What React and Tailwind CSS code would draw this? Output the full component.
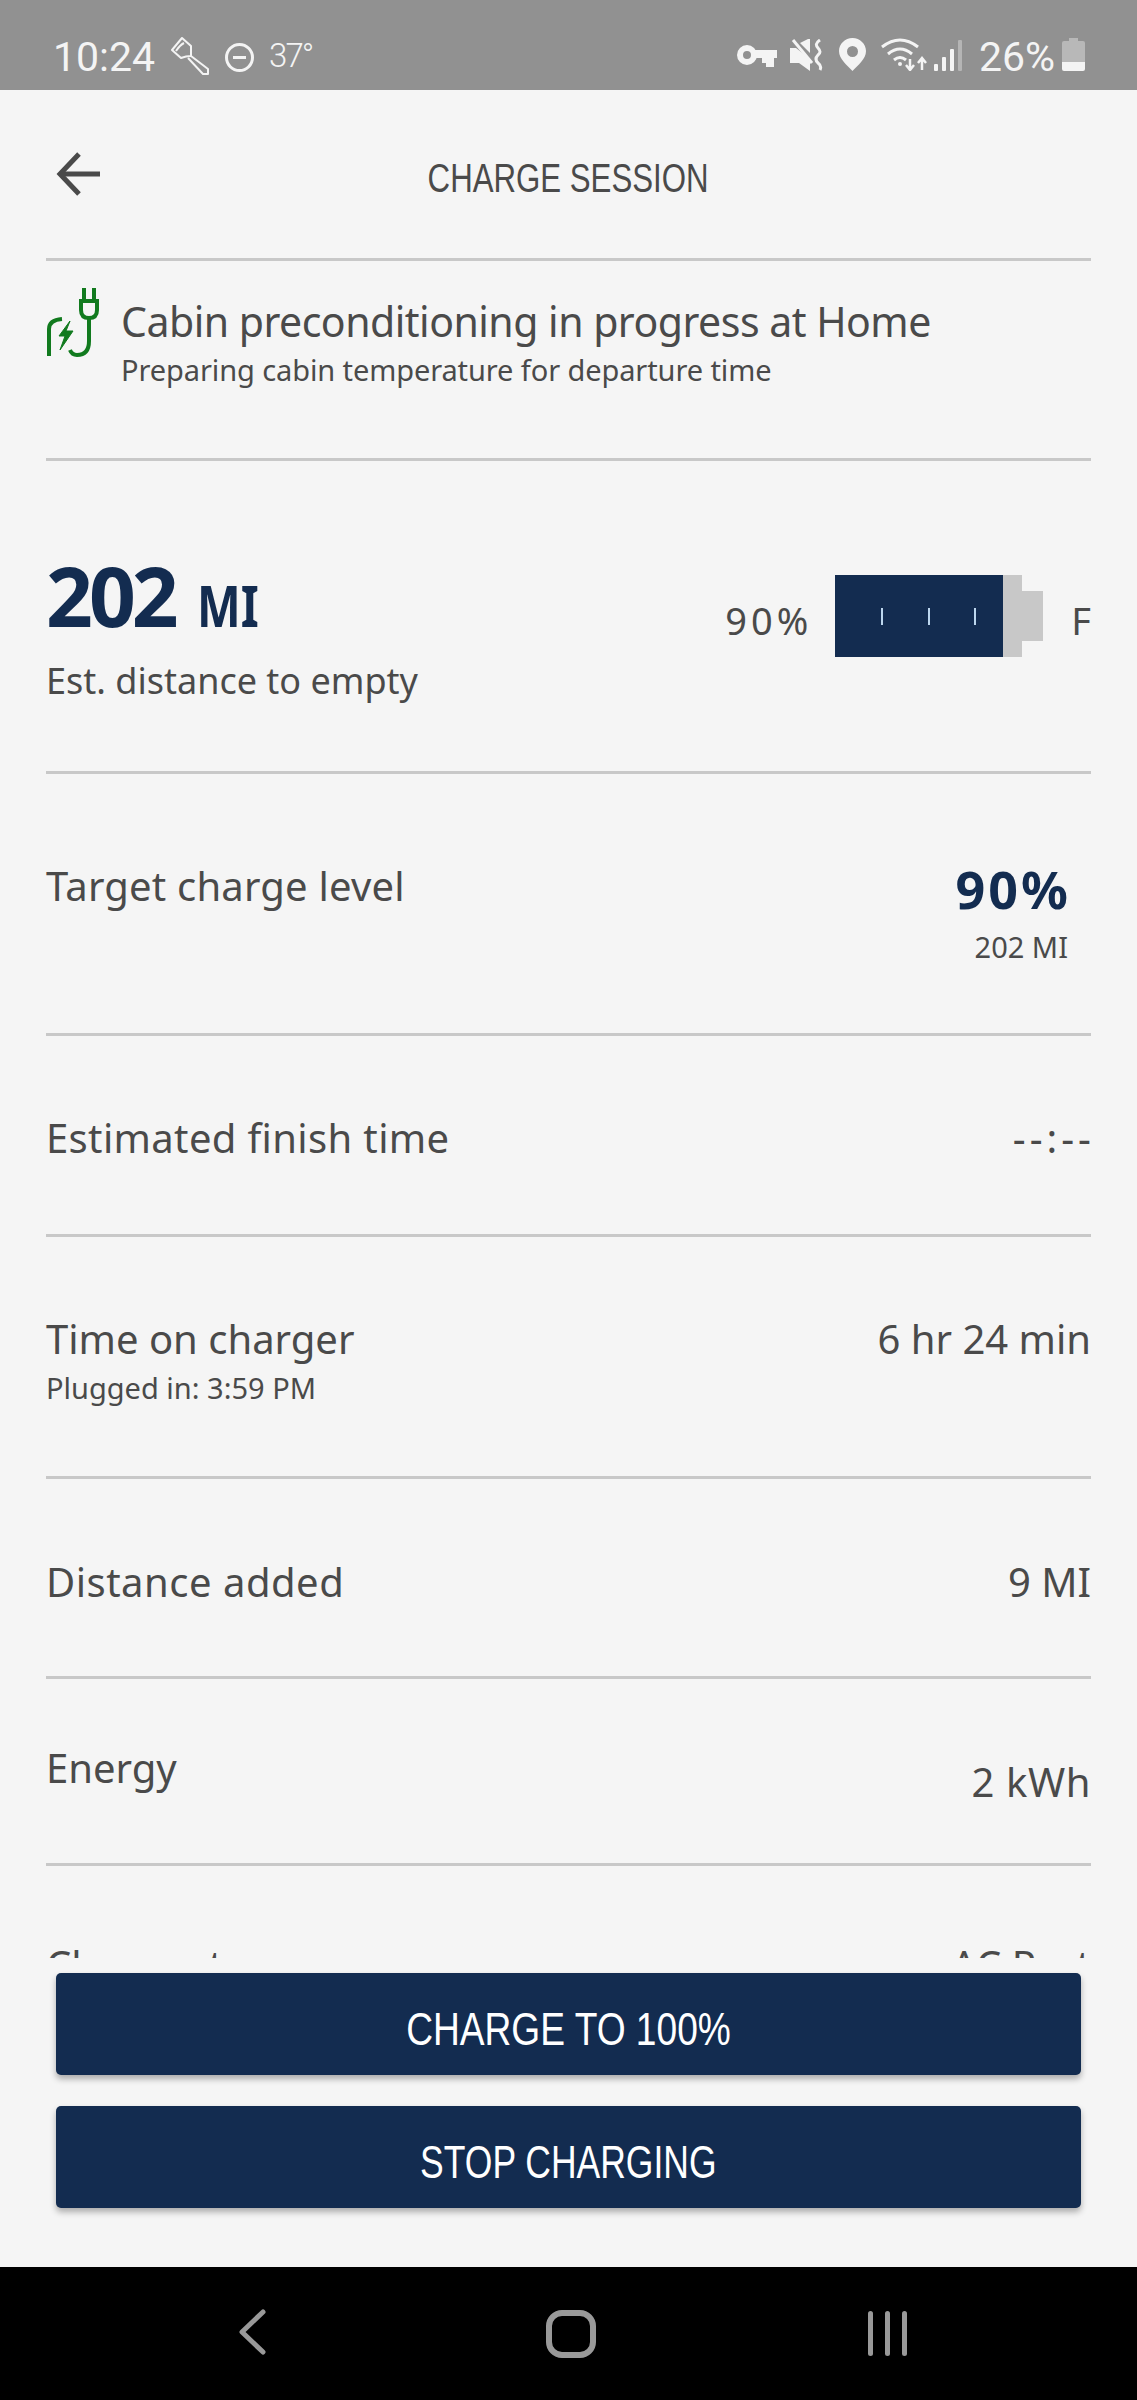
import React from 'react';

const body = "font-['Noto_Sans','Open_Sans',sans-serif]";
const narrow = "font-['Liberation_Sans',sans-serif]";

function Flashlight() {
  return (
    <svg width="38" height="38" viewBox="0 0 38 38" fill="none" stroke="#f4f4f4" strokeWidth="2" strokeLinejoin="round">
      <path d="M1 13 L11 1 L20 9 Q20 16 20 19 Q15 19 10 21 Z" />
      <path d="M5 14 Q9 8 13 6" />
      <path d="M20 19 L37 32 L37 37 L32 37 L17 21" />
    </svg>
  );
}

function Key() {
  return (
    <svg width="40" height="22" viewBox="0 0 40 22" fill="none">
      <circle cx="10" cy="10" r="7" stroke="#f4f4f4" strokeWidth="6" />
      <path d="M16 5 H40 V13 H37 V22 H29 V18 H25 V13 H16 Z" fill="#f4f4f4" />
    </svg>
  );
}

function Mute() {
  return (
    <svg width="34" height="32" viewBox="0 0 34 32" fill="none">
      <path d="M0 9 H6 L20 20 V32 L9 24 H0 Z" fill="#f4f4f4" />
      <path d="M3 1 L22 24" stroke="#f4f4f4" strokeWidth="3" />
      <path d="M10 4 L20 -1 V14 Z" fill="#f4f4f4" />
      <path d="M30 1 Q24 5 28 9 Q32 13 28 16 Q24 20 28 24 Q32 27 30 31" stroke="#f4f4f4" strokeWidth="3" />
    </svg>
  );
}

function Pin() {
  return (
    <svg width="27" height="33" viewBox="0 0 27 33">
      <path fillRule="evenodd" d="M13.5 0 C21 0 27 6 27 13 C27 21 19 27 13.5 33 C8 27 0 21 0 13 C0 6 6 0 13.5 0 Z M13.5 8 A5.5 5.5 0 1 0 13.5 19 A5.5 5.5 0 1 0 13.5 8 Z" fill="#f4f4f4" />
    </svg>
  );
}

function Wifi() {
  return (
    <svg width="46" height="33" viewBox="0 0 46 33" fill="none" stroke="#f4f4f4" strokeWidth="3">
      <path d="M1 9 Q19 -5 37 9" />
      <path d="M7 16 Q19 6 31 16" />
      <path d="M13 22 Q19 17 25 22" />
      <circle cx="19" cy="26" r="2" fill="#f4f4f4" stroke="none" />
      <path d="M29 21 V31 M25 27 L29 32 L33 27" strokeWidth="2.5" />
      <path d="M41 32 V21 M37 25 L41 20 L45 25" strokeWidth="2.5" />
    </svg>
  );
}

function Signal() {
  return (
    <svg width="29" height="31" viewBox="0 0 29 31">
      <rect x="0" y="24" width="4" height="7" rx="1" fill="#f4f4f4" />
      <rect x="8" y="17" width="4" height="14" rx="1" fill="#f4f4f4" />
      <rect x="16" y="9" width="4" height="22" rx="1" fill="#f4f4f4" />
      <rect x="24" y="0" width="4" height="31" rx="1" fill="#b5b5b5" />
    </svg>
  );
}

function BatteryIcon() {
  return (
    <svg width="23" height="33" viewBox="0 0 23 33">
      <path d="M7 0 H16 V3 H21 Q23 3 23 5 V24 H0 V5 Q0 3 2 3 H7 Z" fill="#b8b8b8" />
      <path d="M0 24 H23 V31 Q23 33 21 33 H2 Q0 33 0 31 Z" fill="#f4f4f4" />
    </svg>
  );
}

function PlugIcon() {
  return (
    <svg className="shrink-0" width="56" height="70" viewBox="0 0 56 70" fill="none" stroke="#117a1e" strokeWidth="4">
      <path d="M3 68 V41 Q3 32 16 31" />
      <path d="M24 33 L13 48 L19 48 L14 62 L27 43 L20 43 Z" fill="#117a1e" strokeWidth="1" strokeLinejoin="round" />
      <path d="M38 0 V12 M48 0 V12" />
      <path d="M35 13 H51 V22 Q51 30 43 30 Q35 30 35 22 Z" />
      <path d="M43 30 V53 Q43 67 31 67 Q26 67 24 62" />
    </svg>
  );
}

function Row({ className = '', children }) {
  return <div className={`mx-[46px] border-b-[3px] border-[#c8c8c8] ${className}`}>{children}</div>;
}

function App() {
  return (
    <div className={`flex h-[2400px] w-[1137px] flex-col overflow-hidden bg-[#f5f5f5] text-[#4a4a4a] ${body}`}>
      {/* status bar */}
      <div className="flex h-[90px] shrink-0 items-start justify-between bg-[#919191] pl-[53px] pr-[52px] pt-[37px] font-['Roboto',sans-serif] text-[#f4f4f4]">
        <div className="flex items-start">
          <span className="text-[41px] leading-[40px]">10:24</span>
          <span className="ml-[16px]"><Flashlight /></span>
          <span className="ml-[16px] mt-[6px] flex h-[29px] w-[29px] items-center justify-center rounded-full border-[3px] border-[#f4f4f4]">
            <span className="h-[3px] w-[13px] bg-[#f4f4f4]" />
          </span>
          <span className="ml-[15px] mt-[1px] text-[33px] font-light leading-[36px] tracking-[-2px]">37°</span>
        </div>
        <div className="flex items-start">
          <span className="mt-[8px]"><Key /></span>
          <span className="ml-[13px] mt-[2px]"><Mute /></span>
          <span className="ml-[15px] mt-[1px]"><Pin /></span>
          <span className="ml-[15px] mt-[1px]"><Wifi /></span>
          <span className="ml-[7px] mt-[3px]"><Signal /></span>
          <span className="ml-[16px] text-[41px] leading-[40px]">26%</span>
          <span className="ml-[7px] mt-[1px]"><BatteryIcon /></span>
        </div>
      </div>

      {/* scrolling content */}
      <div className="min-h-0 flex-1 overflow-hidden">
        <div className="relative flex h-[168px] items-center justify-center pb-[2px] pt-[10px]">
          <svg className="absolute left-[56px] top-[62px]" width="46" height="44" viewBox="0 0 46 44" fill="none" stroke="#4a4a4a" strokeWidth="5">
            <path d="M23 2 L4 22 L23 42" />
            <path d="M4 22 H44" />
          </svg>
          <h1 className={`scale-x-[0.78] whitespace-nowrap text-[40px] font-normal leading-none ${narrow}`}>CHARGE SESSION</h1>
        </div>
        <div className="mx-[46px] h-[3px] bg-[#c8c8c8]" />

        <Row className="flex h-[200px] items-start pt-[27px]">
          <PlugIcon />
          <div className="ml-[19px] mt-[8px]">
            <div className="text-[41px] leading-[50px] tracking-[-0.5px]">Cabin preconditioning in progress at Home</div>
            <div className="mt-[4px] text-[29px] leading-[40px] tracking-[-0.1px]">Preparing cabin temperature for departure time</div>
          </div>
        </Row>

        <Row className="flex h-[313px] items-start justify-between pt-[84px]">
          <div>
            <div className="flex items-baseline font-bold leading-[100px] text-[#132c50]">
              <span className="text-[82px] tracking-[-4px]">202</span>
              <span className="ml-[22px] origin-left scale-x-[0.8] text-[58px]">MI</span>
            </div>
            <div className="mt-[5px] text-[36px] leading-[42px]">Est. distance to empty</div>
          </div>
          <div className="mt-[30px] flex items-center">
            <span className="mt-[8px] text-[38px] tracking-[4px]">90%</span>
            <div className="ml-[23px] flex items-center">
              <div className="flex h-[82px] w-[187px] bg-[#c8c8c8]">
                <div className="flex h-full w-[168px] items-center justify-between bg-[#132c50] pl-[46px] pr-[27px]">
                  <span className="h-[17px] w-[2px] bg-[#bcd6ee]" />
                  <span className="h-[17px] w-[2px] bg-[#bcd6ee]" />
                  <span className="h-[17px] w-[2px] bg-[#bcd6ee]" />
                </div>
              </div>
              <div className="h-[50px] w-[21px] bg-[#c8c8c8]" />
            </div>
            <span className="ml-[28px] mt-[8px] text-[38px]">F</span>
          </div>
        </Row>

        <Row className="flex h-[262px] items-start justify-between pt-[87px]">
          <span className="text-[40px] leading-[50px] tracking-[0.2px]">Target charge level</span>
          <div className="mr-[23px] text-right">
            <div className="mr-[-3px] text-[52px] font-bold leading-[56px] tracking-[3px] text-[#132c50]">90%</div>
            <div className="mt-[10px] text-[29px] leading-[40px]">202 MI</div>
          </div>
        </Row>

        <Row className="flex h-[201px] items-start justify-between pt-[77px] text-[40px] leading-[50px]">
          <span className="tracking-[0.35px]">Estimated finish time</span>
          <span className="mr-[-4px] tracking-[4px]">--:--</span>
        </Row>

        <Row className="flex h-[242px] items-start justify-between pt-[77px] text-[40px] leading-[50px]">
          <div>
            <div>Time on charger</div>
            <div className="mt-[2px] text-[29px] leading-[44px]">Plugged in: 3:59 PM</div>
          </div>
          <span>6 hr 24 min</span>
        </Row>

        <Row className="flex h-[200px] items-start justify-between pt-[78px] text-[40px] leading-[50px]">
          <span className="tracking-[0.5px]">Distance added</span>
          <span>9 MI</span>
        </Row>

        <Row className="flex h-[187px] items-start justify-between pt-[64px] text-[40px] leading-[50px]">
          <span>Energy</span>
          <span className="mt-[14px] tracking-[0.6px]">2 kWh</span>
        </Row>

        <div className="mx-[46px] flex items-start justify-between pt-[74px] text-[40px] leading-[50px]">
          <span>Charger type</span>
          <span>AC Port</span>
        </div>
      </div>

      {/* action buttons */}
      <div className="flex shrink-0 flex-col gap-[31px] px-[56px] pb-[59px] pt-[15px]">
        <button className="h-[102px] rounded-[5px] bg-[#132c50] pt-[9px] text-white shadow-[0_4px_6px_rgba(0,0,0,0.3)]">
          <span className={`inline-block scale-x-[0.79] whitespace-nowrap text-[47px] leading-none ${narrow}`}>CHARGE TO 100%</span>
        </button>
        <button className="h-[102px] rounded-[5px] bg-[#132c50] pt-[9px] text-white shadow-[0_4px_6px_rgba(0,0,0,0.3)]">
          <span className={`inline-block scale-x-[0.755] whitespace-nowrap text-[47px] leading-none ${narrow}`}>STOP CHARGING</span>
        </button>
      </div>

      {/* android nav */}
      <div className="flex h-[133px] shrink-0 items-start bg-black pl-[239px] pt-[42px]">
        <svg width="27" height="46" viewBox="0 0 27 46" fill="none" stroke="#999999" strokeWidth="5" strokeLinecap="round" strokeLinejoin="round">
          <path d="M24 3 L3 23 L24 43" />
        </svg>
        <svg className="ml-[279px]" width="52" height="50" viewBox="0 0 52 50" fill="none" stroke="#999999" strokeWidth="6">
          <rect x="4" y="4" width="44" height="42" rx="13" />
        </svg>
        <div className="ml-[271px] mt-[2px] flex gap-[12px]">
          <span className="h-[45px] w-[5px] rounded-full bg-[#999999]" />
          <span className="h-[45px] w-[5px] rounded-full bg-[#999999]" />
          <span className="h-[45px] w-[5px] rounded-full bg-[#999999]" />
        </div>
      </div>
    </div>
  );
}

export default App;
